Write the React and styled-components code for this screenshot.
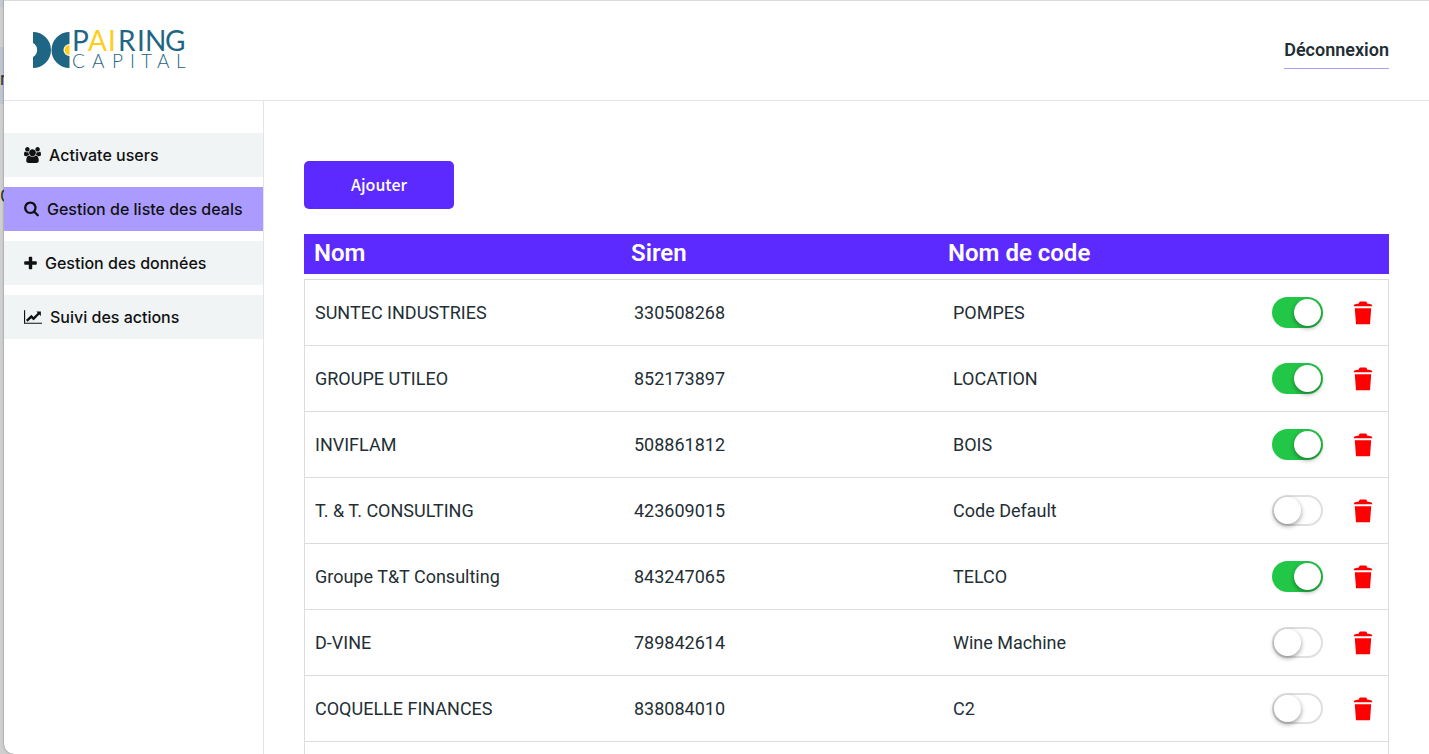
import { useState } from "react";
import styled, { createGlobalStyle } from "styled-components";

const GlobalStyle = createGlobalStyle`
  * {
    box-sizing: border-box;
  }
  body {
    margin: 0;
    background: #cfcfcf;
    color: #1f2f35;
    font-family: Roboto, "Liberation Sans", sans-serif;
    font-size: 18px;
  }
`;

const Desktop = styled.div`
  display: flex;
  height: 100vh;
  overflow: hidden;
`;

const Behind = styled.div`
  flex: 0 0 4px;
  display: flex;
  flex-direction: column;
  align-items: flex-start;
  overflow: hidden;
  background: linear-gradient(#c4c9d2 0 7px, #cfcfcf 7px 47px, #bfc5d1 47px 104px, #cfcfcf 104px);
  font-size: 18px;
  line-height: 20px;
  color: #333;
`;

const BehindText = styled.span`
  margin-top: ${props => props.$top}px;
`;

const Window = styled.div`
  flex: 1;
  display: flex;
  flex-direction: column;
  min-width: 0;
  overflow: hidden;
  background: #fff;
  border-top: 1px solid #d9d9d9;
  border-bottom-left-radius: 10px;
  box-shadow: 0 0 2px rgba(0,0,0,.5);
`;

const Header = styled.header`
  display: flex;
  align-items: center;
  justify-content: space-between;
  flex: 0 0 100px;
  padding: 0 40px 0 28px;
  border-bottom: 1px solid #e4e4e4;
`;

const Brand = styled.a`
  display: flex;
`;

const Logout = styled.a`
  padding: 6px 0;
  border-bottom: 1px solid #ab9bff;
  color: #1f2f35;
  font-weight: 600;
  line-height: 24px;
  text-decoration: none;
`;

const Body = styled.div`
  flex: 1;
  display: flex;
  min-height: 0;
`;

const Sidebar = styled.nav`
  flex: 0 0 260px;
  display: flex;
  flex-direction: column;
  gap: 10px;
  padding-top: 32px;
  border-right: 1px solid #e4e4e4;
`;

const NavLink = styled.a`
  display: flex;
  align-items: center;
  gap: 8px;
  height: 44px;
  padding-left: 20px;
  background: ${props => props.$active ? "#ab9bff" : "#f0f4f5"};
  color: #111;
  font-family: Inter, sans-serif;
  font-size: 16px;
  font-weight: 500;
  text-decoration: none;
  white-space: nowrap;
`;

const Main = styled.main`
  flex: 1;
  min-width: 0;
  padding: 60px 40px 0;
  overflow: hidden;
`;

const AddButton = styled.button`
  display: block;
  width: 150px;
  height: 48px;
  padding: 0 0 2px;
  border: 0;
  border-radius: 5px;
  background: #5c29ff;
  color: #fff;
  font-family: "Noto Sans CJK JP", sans-serif;
  font-size: 16px;
  font-weight: 500;
  cursor: pointer;
`;

const Table = styled.table`
  display: block;
  margin-top: 25px;
`;

const Head = styled.thead`
  display: block;
  margin-bottom: 5px;
  background: #5c29ff;
  color: #fff;
`;

const HeadRow = styled.tr`
  display: grid;
  grid-template-columns: repeat(3, 1fr) 134px;
`;

const HeadCell = styled.th`
  height: 40px;
  padding: 0 10px;
  font-size: 24px;
  font-weight: 600;
  line-height: 38px;
  text-align: left;
`;

const Rows = styled.tbody`
  display: block;
  border: 1px solid #dcdcdc;
`;

const Row = styled.tr`
  display: grid;
  grid-template-columns: repeat(3, 1fr) 126px;
  align-items: center;
  height: 66px;
  border-bottom: 1px solid #dcdcdc;
`;

const Cell = styled.td`
  padding: 0 10px;
`;

const Actions = styled.td`
  display: flex;
  align-items: center;
  justify-content: space-between;
  padding: 0 15px 0 10px;
`;

const Switch = styled.input`
  appearance: none;
  display: flex;
  width: 51px;
  height: 31px;
  margin: 0;
  padding: 2px;
  border-radius: 16px;
  background: #fff;
  box-shadow: inset 0 0 0 2px #dfdfdf;
  cursor: pointer;
  &::before {
    content: "";
    width: 27px;
    height: 27px;
    border-radius: 50%;
    background: #fff;
    box-shadow: 0 2px 5px rgba(0,0,0,.4);
  }
  &:checked {
    justify-content: flex-end;
    background: #23c748;
    box-shadow: none;
  }
`;

const DeleteButton = styled.button`
  display: flex;
  padding: 0;
  border: 0;
  background: none;
  color: #f00;
  cursor: pointer;
`;

const icons = {
  users: {
    width: 17,
    box: "0 0 1920 1792",
    path: "M593 896q-162 5-265 128h-134q-82 0-138-40.5t-56-118.5q0-353 124-353 6 0 43.5 21t97.5 42.5 119 21.5q67 0 133-23-5 37-5 66 0 139 81 256zm1071 637q0 120-73 189.5t-194 69.5h-874q-121 0-194-69.5t-73-189.5q0-53 3.5-103.5t14-109 26.5-108.5 43-97.5 62-81 85.5-53.5 111.5-20q10 0 43 21.5t73 48 107 48 135 21.5 135-21.5 107-48 73-48 43-21.5q61 0 111.5 20t85.5 53.5 62 81 43 97.5 26.5 108.5 14 109 3.5 103.5zm-1024-1277q0 106-75 181t-181 75-181-75-75-181 75-181 181-75 181 75 75 181zm704 384q0 159-112.5 271.5t-271.5 112.5-271.5-112.5-112.5-271.5 112.5-271.5 271.5-112.5 271.5 112.5 112.5 271.5zm576 225q0 78-56 118.5t-138 40.5h-134q-103-123-265-128 81-117 81-256 0-29-5-66 66 23 133 23 59 0 119-21.5t97.5-42.5 43.5-21q124 0 124 353zm-128-609q0 106-75 181t-181 75-181-75-75-181 75-181 181-75 181 75 75 181z",
  },
  search: {
    width: 15,
    box: "0 -60 1664 1792",
    path: "M1152 704q0-185-131.5-316.5t-316.5-131.5-316.5 131.5-131.5 316.5 131.5 316.5 316.5 131.5 316.5-131.5 131.5-316.5zm512 832q0 52-38 90t-90 38q-54 0-90-38l-343-342q-179 124-399 124-143 0-273.5-55.5t-225-150-150-225-55.5-273.5 55.5-273.5 150-225 225-150 273.5-55.5 273.5 55.5 225 150 150 225 55.5 273.5q0 220-124 399l343 343q37 37 37 90z",
  },
  plus: {
    width: 13,
    box: "0 -60 1408 1792",
    path: "M1408 736v192q0 40-28 68t-68 28h-416v416q0 40-28 68t-68 28h-192q-40 0-68-28t-28-68v-416h-416q-40 0-68-28t-28-68v-192q0-40 28-68t68-28h416v-416q0-40 28-68t68-28h192q40 0 68 28t28 68v416h416q40 0 68 28t28 68z",
  },
  chart: {
    width: 18,
    box: "0 0 2048 1792",
    path: "M2048 1536v128h-2048v-1536h128v1408h1920zm-128-1248v435q0 21-19.5 29.5t-35.5-7.5l-121-121-633 633q-10 10-23 10t-23-10l-233-233-416 416-192-192 585-585q10-10 23-10t23 10l233 233 464-464-121-121q-16-16-7.5-35.5t29.5-19.5h435q14 0 22 9t8 23z",
  },
};

function Icon({name}) {
  const icon = icons[name];
  return (
    <svg width={icon.width} height="16" viewBox={icon.box} fill="currentColor" aria-hidden="true">
      <path d={icon.path}/>
    </svg>
  );
}

function TrashIcon() {
  return (
    <svg width="20" height="24" viewBox="0 0 20 24" fill="currentColor" aria-hidden="true">
      <path d="M6.300 1.200Q6.600.5 7.400.5h5.200q.8 0 1.100.7l.5 1.200 3.800.8q1.300.4 1.300 2H.7q0-1.600 1.300-2l3.800-.8z"/>
      <path d="M1.800 7.300h16.400l-1.200 16H3z"/>
    </svg>
  );
}

function Logo() {
  return (
    <svg width="156" height="40" viewBox="0 0 156 40" overflow="visible" role="img" aria-label="Pairing Capital">
      <path fill="#1f6684" d="M1 1a18 18 0 0 1 0 36V26a8 8 0 0 0 0-14z"/>
      <path fill="#1f6684" d="M37.500 1a18 18 0 0 0 0 36V25a6 6 0 0 1 0-12z"/>
      <path fill="#ffcd1c" d="M37.500 14a5 5 0 0 0 0 10z"/>
      <g fontFamily="Lato, sans-serif" fill="#1f6684">
        <text y="20" fontSize="28" x="40 56 76 86 105 113 133">P<tspan fill="#ffcd1c">AI</tspan>RING</text>
        <text y="37" fontSize="19" fontWeight="300" x="40 60 80 98 109 125 144">CAPITAL</text>
      </g>
    </svg>
  );
}

const links = [
  {icon: "users", label: "Activate users"},
  {icon: "search", label: "Gestion de liste des deals", active: true},
  {icon: "plus", label: "Gestion des données"},
  {icon: "chart", label: "Suivi des actions"},
];

const initialDeals = [
  {name: "SUNTEC INDUSTRIES", siren: "330508268", code: "POMPES", enabled: true},
  {name: "GROUPE UTILEO", siren: "852173897", code: "LOCATION", enabled: true},
  {name: "INVIFLAM", siren: "508861812", code: "BOIS", enabled: true},
  {name: "T. & T. CONSULTING", siren: "423609015", code: "Code Default", enabled: false},
  {name: "Groupe T&T Consulting", siren: "843247065", code: "TELCO", enabled: true},
  {name: "D-VINE", siren: "789842614", code: "Wine Machine", enabled: false},
  {name: "COQUELLE FINANCES", siren: "838084010", code: "C2", enabled: false},
];

export default function App() {
  const [deals, setDeals] = useState(initialDeals);
  function toggleDeal(siren) {
    setDeals(prev => prev.map(d => d.siren === siren ? {...d, enabled: !d.enabled} : d));
  }
  function removeDeal(siren) {
    setDeals(prev => prev.filter(d => d.siren !== siren));
  }
  return (
    <>
      <GlobalStyle/>
      <Desktop>
        <Behind aria-hidden="true">
          <BehindText $top={69}>r</BehindText>
          <BehindText $top={97}>C</BehindText>
        </Behind>
        <Window>
          <Header>
            <Brand href="#"><Logo/></Brand>
            <Logout href="#">Déconnexion</Logout>
          </Header>
          <Body>
            <Sidebar>
              {links.map(link => (
                <NavLink key={link.label} href="#" $active={link.active}>
                  <Icon name={link.icon}/>
                  {link.label}
                </NavLink>
              ))}
            </Sidebar>
            <Main>
              <AddButton>Ajouter</AddButton>
              <Table>
                <Head>
                  <HeadRow>
                    <HeadCell>Nom</HeadCell>
                    <HeadCell>Siren</HeadCell>
                    <HeadCell>Nom de code</HeadCell>
                  </HeadRow>
                </Head>
                <Rows>
                  {deals.map(deal => (
                    <Row key={deal.siren}>
                      <Cell>{deal.name}</Cell>
                      <Cell>{deal.siren}</Cell>
                      <Cell>{deal.code}</Cell>
                      <Actions>
                        <Switch
                          type="checkbox"
                          role="switch"
                          aria-label={"Activer " + deal.name}
                          checked={deal.enabled}
                          onChange={() => toggleDeal(deal.siren)}
                        />
                        <DeleteButton aria-label={"Supprimer " + deal.name} onClick={() => removeDeal(deal.siren)}>
                          <TrashIcon/>
                        </DeleteButton>
                      </Actions>
                    </Row>
                  ))}
                  <Row/>
                </Rows>
              </Table>
            </Main>
          </Body>
        </Window>
      </Desktop>
    </>
  );
}
